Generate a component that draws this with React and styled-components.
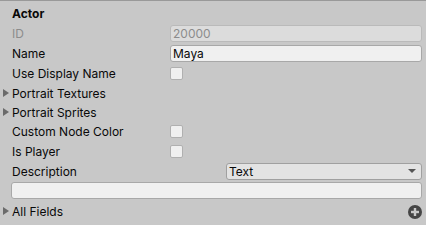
import React from 'react';
import styled, { createGlobalStyle } from 'styled-components';

const Global = createGlobalStyle`
  html, body { margin: 0; padding: 0; background: #c8c8c8; }
  body { font-family: Inter, "Liberation Sans", sans-serif; font-size: 12px; color: #090909; }
`;

const Panel = styled.div`
  width: 426px;
  height: 225px;
  box-sizing: border-box;
  border-top: 1px solid #999999;
  background: #c8c8c8;
  padding: 3px 4px 0 3px;
  display: flex;
  flex-direction: column;
`;

const Header = styled.div`
  height: 18px;
  display: flex;
  align-items: center;
  padding-left: 9px;
  font-weight: 700;
  margin-bottom: 2px;
`;

const Row = styled.div`
  height: 18px;
  margin-bottom: ${(p) => (p.$fold ? 1 : 2)}px;
  display: grid;
  grid-template-columns: 158px 1fr;
  align-items: center;
  padding-left: ${(p) => (p.$fold ? 0 : 9)}px;
  color: ${(p) => (p.$disabled ? '#8c8c8c' : '#090909')};
  white-space: nowrap;
`;

const Label = styled.div`
  display: flex;
  align-items: center;
`;

const Arrow = styled.span`
  width: 9px;
  display: inline-flex;
  justify-content: flex-start;
  &::before {
    content: '';
    border-left: 6px solid #6b6b6b;
    border-top: 4px solid transparent;
    border-bottom: 4px solid transparent;
  }
`;

const Field = styled.div`
  height: 17px;
  box-sizing: border-box;
  border: 1px solid ${(p) => (p.$disabled ? '#bababa' : '#a8a8a8')};
  border-radius: 3px;
  background: ${(p) => (p.$disabled ? '#dcdcdc' : '#f0f0f0')};
  color: ${(p) => (p.$disabled ? '#8c8c8c' : '#090909')};
  padding-left: 2px;
  display: flex;
  align-items: center;
`;

const Check = styled.div`
  width: 13px;
  height: 13px;
  box-sizing: border-box;
  border: 1px solid #b0b0b0;
  border-radius: 2px;
  background: #f0f0f0;
`;

const DescRow = styled.div`
  height: 18px;
  margin-bottom: 2px;
  display: grid;
  grid-template-columns: 214px 1fr;
  align-items: center;
  padding-left: 9px;
`;

const Dropdown = styled.div`
  height: 17px;
  box-sizing: border-box;
  border: 1px solid #a0a0a0;
  border-radius: 3px;
  background: #e3e3e3;
  display: flex;
  align-items: center;
  justify-content: space-between;
  padding: 0 5px 0 2px;
  &::after {
    content: '';
    border-top: 4px solid #555;
    border-left: 4px solid transparent;
    border-right: 4px solid transparent;
  }
`;

const TextArea = styled.div`
  height: 17px;
  box-sizing: border-box;
  margin: 0 0 3px 8px;
  border: 1px solid #a8a8a8;
  border-radius: 3px;
  background: #f0f0f0;
`;

const FoldRow = styled.div`
  height: 18px;
  display: flex;
  align-items: center;
  justify-content: space-between;
`;

const Plus = styled.svg`
  width: 14px;
  height: 14px;
  margin-top: 1px;
`;

const rows = [
  { label: 'ID', type: 'field', value: '20000', disabled: true },
  { label: 'Name', type: 'field', value: 'Maya' },
  { label: 'Use Display Name', type: 'check' },
  { label: 'Portrait Textures', fold: true },
  { label: 'Portrait Sprites', fold: true },
  { label: 'Custom Node Color', type: 'check' },
  { label: 'Is Player', type: 'check' },
];

export default function App() {
  return (
    <>
      <Global />
      <Panel>
        <Header>Actor</Header>
        {rows.map((r) => (
          <Row key={r.label} $fold={r.fold} $disabled={r.disabled}>
            <Label>
              {r.fold && <Arrow />}
              {r.label}
            </Label>
            {r.type === 'field' && <Field $disabled={r.disabled}>{r.value}</Field>}
            {r.type === 'check' && <Check />}
          </Row>
        ))}
        <DescRow>
          <span>Description</span>
          <Dropdown>Text</Dropdown>
        </DescRow>
        <TextArea />
        <FoldRow>
          <Label>
            <Arrow />
            All Fields
          </Label>
          <Plus viewBox="0 0 14 14">
            <circle cx="7" cy="7" r="7" fill="#454545" />
            <rect x="3" y="5.8" width="8" height="2.4" fill="#c8c8c8" />
            <rect x="5.8" y="3" width="2.4" height="8" fill="#c8c8c8" />
          </Plus>
        </FoldRow>
      </Panel>
    </>
  );
}
